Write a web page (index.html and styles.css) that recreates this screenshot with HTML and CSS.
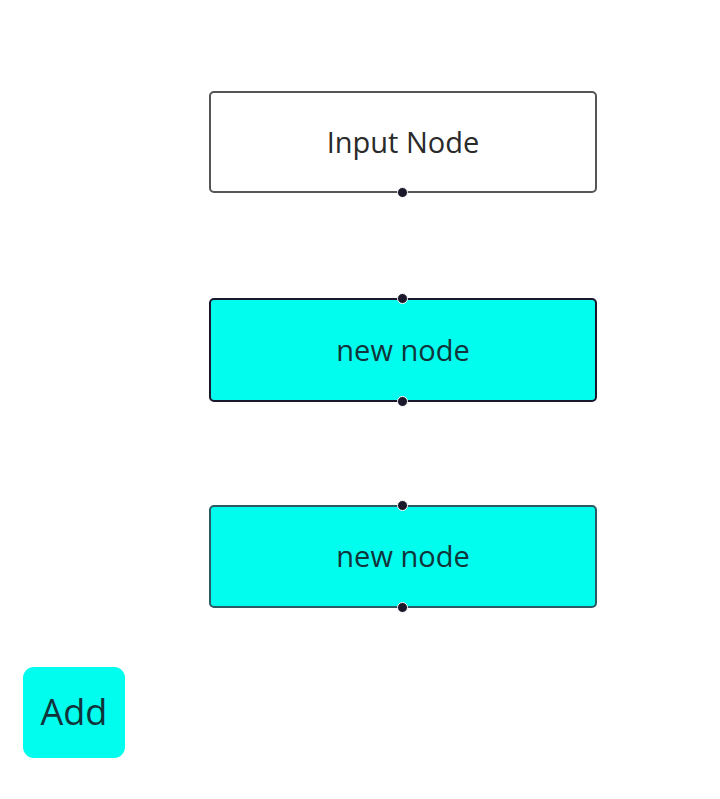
FILE: index.html
```html
<!DOCTYPE html>
<html lang="en">
<head>
    <meta charset="UTF-8">
    <meta name="viewport" content="width=device-width, initial-scale=1.0">
    <title>Flow</title>
    <link rel="stylesheet" href="styles.css">
</head>
<body>
    <div class="flow">
        <!-- nodes sit on the canvas at their own coordinates -->
        <div class="node node-input" style="left: 209px; top: 91px;">
            Input Node
            <span class="handle handle-bottom"></span>
        </div>

        <div class="node node-new node-selected" style="left: 209px; top: 298px;">
            <span class="handle handle-top"></span>
            new node
            <span class="handle handle-bottom"></span>
        </div>

        <div class="node node-new" style="left: 209px; top: 505px;">
            <span class="handle handle-top"></span>
            new node
            <span class="handle handle-bottom"></span>
        </div>

        <div class="panel">
            <button class="add-btn" type="button">Add</button>
        </div>
    </div>
</body>
</html>
```

FILE: styles.css
```css
/* base */
body {
    margin: 0;
    padding: 0;
    background-color: #ffffff;
    font-family: "Open Sans", "Noto Sans", sans-serif;
    color: #222222;
}

/* canvas */
.flow {
    position: relative;
    width: 720px;
    height: 799px;
    overflow: hidden;
}

/* nodes */
.node {
    position: absolute;
    width: 388px;
    height: 102px;
    box-sizing: border-box;
    border: 2px solid #555555;
    border-radius: 5px;
    background-color: #ffffff;
    display: flex;
    align-items: center;
    justify-content: center;
    padding-bottom: 2px;
    font-size: 29px;
    color: #2a2a2a;
}
.node-new {
    background-color: #00fdee;
    border-color: #2b5a63;
    height: 103px;
    color: #10343a;
}
.node-selected {
    border-color: #1a192b;
    height: 104px;
}

/* connection handles */
.handle {
    position: absolute;
    left: 50%;
    width: 9px;
    height: 9px;
    margin-left: -6px;
    border: 1px solid #ffffff;
    border-radius: 50%;
    background-color: #1a192b;
}
.handle-top {
    top: -7px;
}
.handle-bottom {
    bottom: -7px;
}

/* bottom-left panel */
.panel {
    position: absolute;
    left: 23px;
    bottom: 41px;
}
.add-btn {
    width: 102px;
    height: 91px;
    border: none;
    border-radius: 11px;
    background-color: #00fdee;
    font-family: "Open Sans", "Noto Sans", sans-serif;
    font-size: 36px;
    color: #10343a;
    padding: 0 0 2px;
    cursor: pointer;
}
```
